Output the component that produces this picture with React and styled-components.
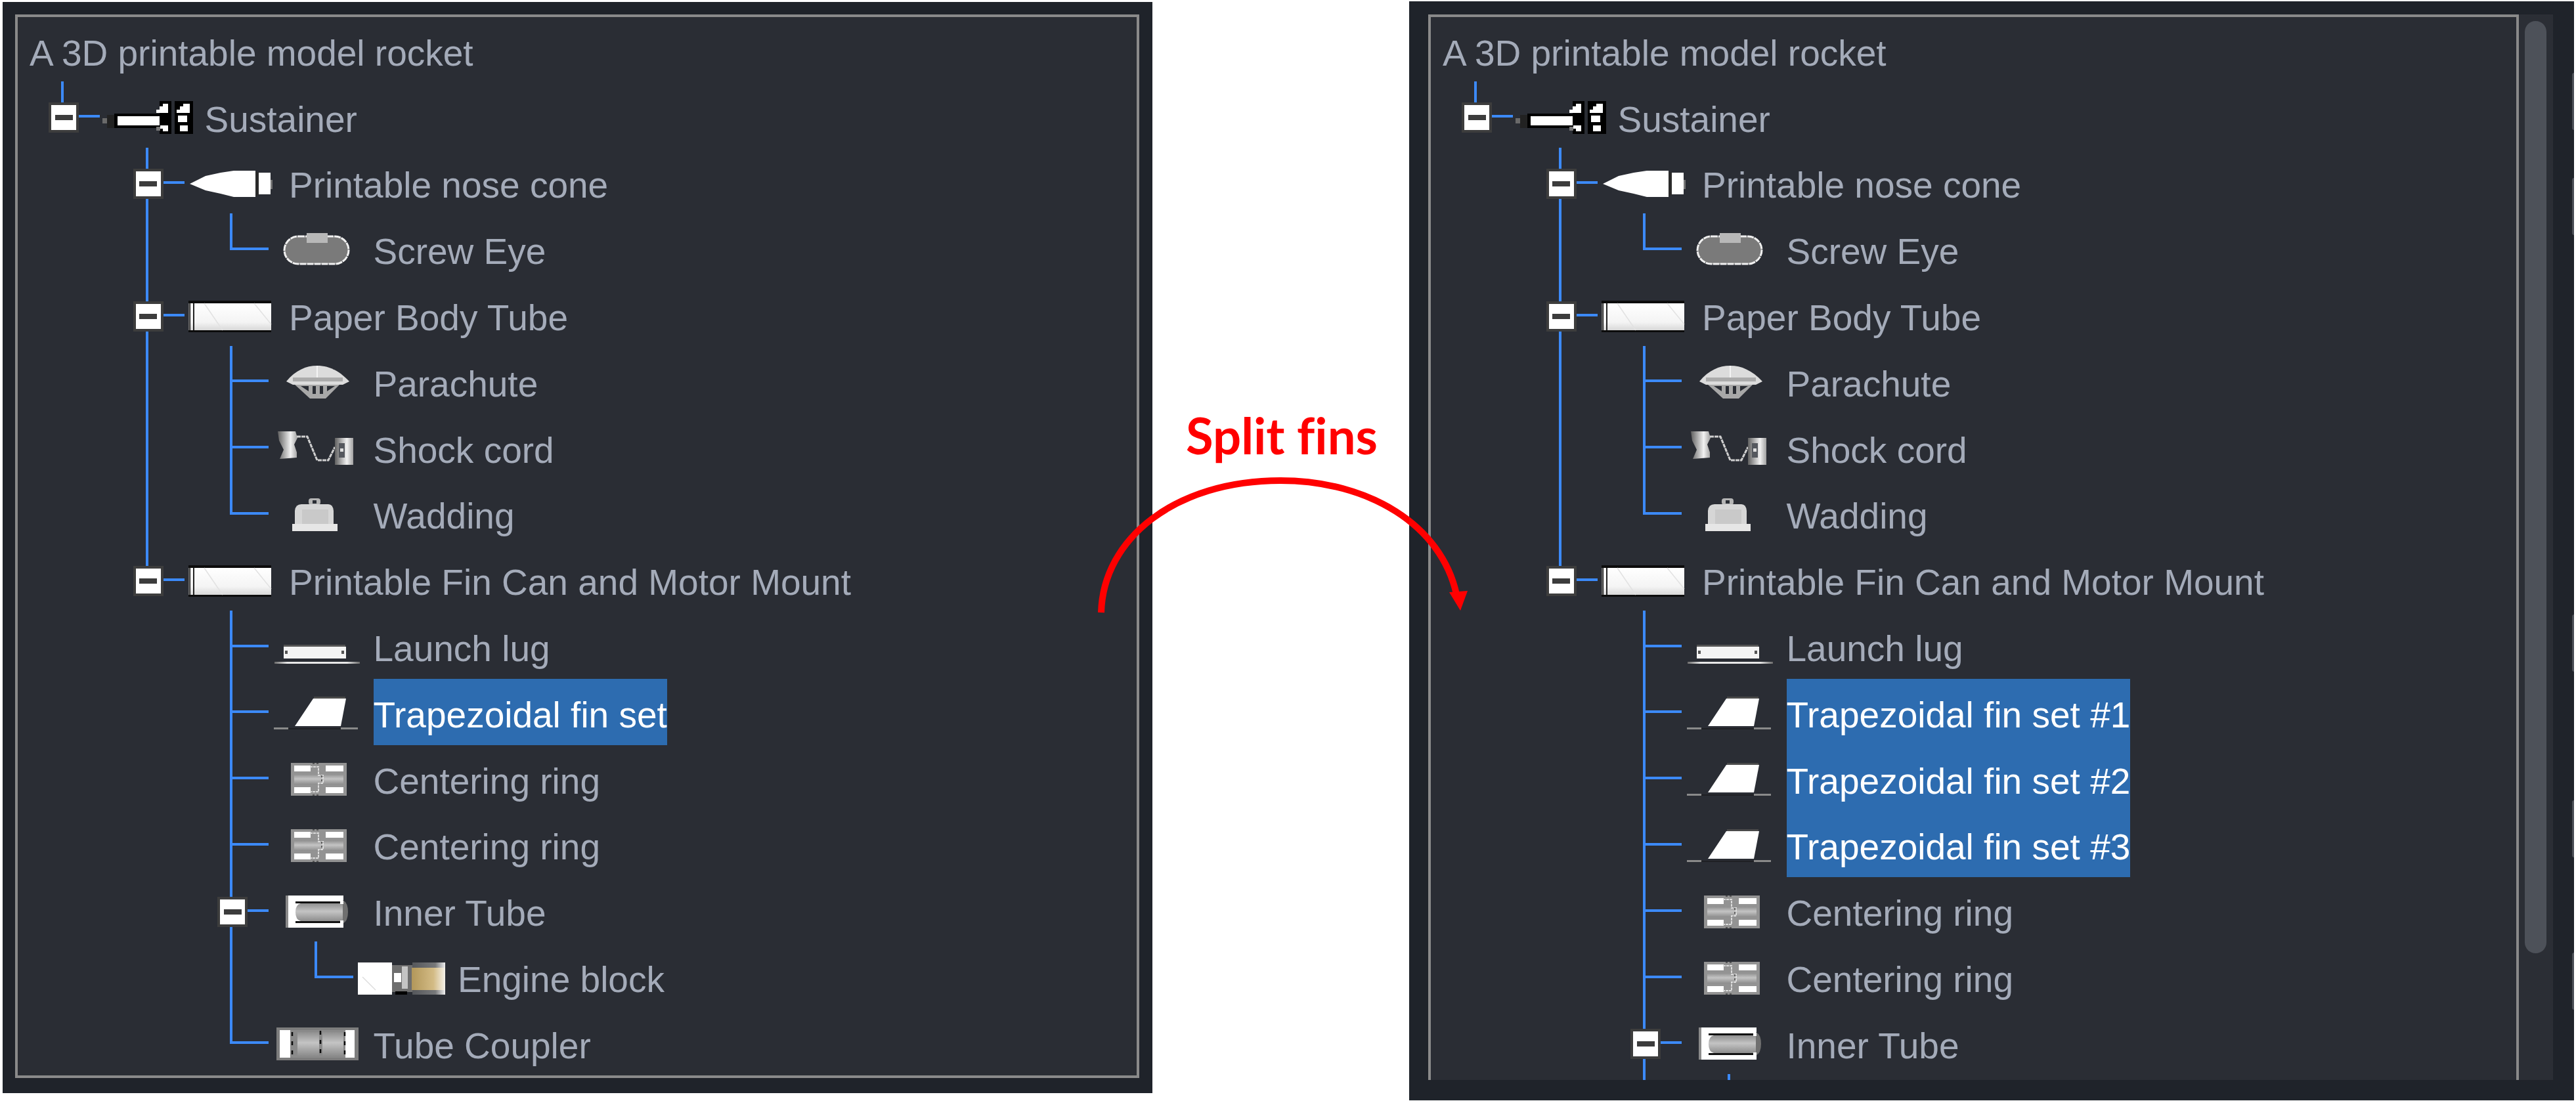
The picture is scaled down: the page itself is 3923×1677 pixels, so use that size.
import React from 'react'
import styled, { createGlobalStyle } from 'styled-components'

const GlobalStyle = createGlobalStyle`
  html, body { margin: 0; padding: 0; background: #fff; }
  body { font-family: "Liberation Sans", Arial, sans-serif; }
`

const Page = styled.div`
  display: flex;
  align-items: flex-start;
  width: 3923px;
  height: 1677px;
  overflow: hidden;
  background: #fff;
`
const Panel = styled.section`
  display: flex;
  box-sizing: border-box;
  flex: none;
  background: #1f232a;
`
const LeftPanel = styled(Panel)`
  width: 1751px;
  height: 1662px;
  margin: 3px 0 0 4px;
  padding: 19px 20px 23px 19px;
`
const RightPanel = styled(Panel)`
  width: 1774px;
  height: 1674px;
  margin-top: 2px;
  padding: 20px 0 31px 29px;
`
const Frame = styled.div`
  flex: 1;
  box-sizing: border-box;
  overflow: hidden;
  background: #2a2d34;
  border: 4px solid #8a8a8a;
  ${p => p.$open && 'border-bottom: 0;'}
`
const Track = styled.div`
  flex: none;
  box-sizing: border-box;
  width: 52px;
  padding: 10px 10px 193px 9px;
  background: #2b2e35;
`
const Thumb = styled.div`
  height: 100%;
  border-radius: 17px;
  background: #4d5159;
`
const EdgeRail = styled.div`
  flex: none;
  display: flex;
  flex-direction: column;
  align-items: flex-end;
  width: 32px;
`
const EdgeTab = styled.span`
  width: 3px;
  height: 87px;
  margin-top: ${p => p.$gap}px;
  border-radius: 3px 0 0 3px;
  background: #4b4f56;
`
const Gutter = styled.div`
  position: relative;
  flex: none;
  box-sizing: border-box;
  width: 391px;
  padding: 618px 0 0 3px;
  text-align: center;
`
const Caption = styled.div`
  font-family: Lato, "Liberation Sans", sans-serif;
  font-weight: 700;
  font-size: 76px;
  line-height: 90px;
  font-variant-ligatures: none;
  color: #ff0000;
  white-space: nowrap;
`
const ArrowArt = styled.svg`
  position: absolute;
  left: -1755px;
  top: 0;
  z-index: 5;
  overflow: visible;
  pointer-events: none;
`
const Row = styled.div`
  display: flex;
  height: 100.8px;
  padding-left: 4px;
`
const Guide = styled.div`
  position: relative;
  flex: none;
  width: 128.5px;

  /* vertical part */
  ${p => p.$kind !== 'blank' && `
    &::before {
      content: '';
      position: absolute;
      left: 62px;
      width: 4px;
      top: -3px;
      bottom: ${p.$kind === 'elbow' || p.$kind === 'end' ? '50%' : '0'};
      background: #3c8afa;
    }
  `}
  /* horizontal part */
  ${p => p.$kind !== 'blank' && p.$kind !== 'pipe' && `
    &::after {
      content: '';
      position: absolute;
      left: 62px;
      width: 59px;
      top: 50%;
      height: 4px;
      margin-top: -2px;
      background: #3c8afa;
    }
  `}
`
const Expander = styled.span`
  position: absolute;
  z-index: 2;
  left: 43px;
  top: 50%;
  margin-top: -21px;
  box-sizing: border-box;
  width: 46px;
  height: 46px;
  display: flex;
  align-items: center;
  justify-content: center;
  background: #fff;
  border: 4px solid #3d3d3d;

  &::after {
    content: '';
    width: 27px;
    height: 8px;
    background: #3c3c3c;
  }
`
const IconSlot = styled.div`
  flex: none;
  display: flex;
  align-items: center;
  justify-content: center;
  width: 130px;
  margin-right: 22px;
`
const IconArt = styled.svg`
  flex: none;
  width: 140px;
  height: 60px;
  margin: 0 -5px;
  overflow: visible;
  filter: blur(0.6px);
`
const Label = styled.span`
  display: flex;
  align-items: center;
  box-sizing: border-box;
  height: 100%;
  padding-top: 9px;
  margin-left: ${p => (p.$root ? '14px' : '0')};
  font-size: 55px;
  white-space: nowrap;
  color: ${p => (p.$selected ? '#fff' : '#a4abb9')};
  background: ${p => (p.$selected ? '#2d6cb0' : 'transparent')};
`

const greys = (
  <defs>
    <linearGradient id="tubeShade" x1="0" y1="0" x2="0" y2="1">
      <stop offset="0" stopColor="#fff" />
      <stop offset="0.7" stopColor="#f4f4f4" />
      <stop offset="1" stopColor="#d8d8d8" />
    </linearGradient>
    <linearGradient id="midShade" x1="0" y1="0" x2="0" y2="1">
      <stop offset="0" stopColor="#8f8f8f" />
      <stop offset="0.45" stopColor="#c4c4c4" />
      <stop offset="1" stopColor="#8d8d8d" />
    </linearGradient>
    <linearGradient id="cordShade" x1="0" y1="0" x2="1" y2="0">
      <stop offset="0" stopColor="#5f5f5f" />
      <stop offset="0.65" stopColor="#f2f2f2" />
      <stop offset="1" stopColor="#a0a0a0" />
    </linearGradient>
    <linearGradient id="goldShade" x1="0" y1="0" x2="1" y2="0">
      <stop offset="0" stopColor="#b2975a" />
      <stop offset="0.65" stopColor="#d3bb85" />
      <stop offset="1" stopColor="#f5f2ea" />
    </linearGradient>
    <linearGradient id="goldEdge" x1="0" y1="0" x2="1" y2="0">
      <stop offset="0" stopColor="#55575b" />
      <stop offset="0.7" stopColor="#77787a" />
      <stop offset="1" stopColor="#f0f0f0" />
    </linearGradient>
    <linearGradient id="lugBase" x1="0" y1="0" x2="1" y2="0">
      <stop offset="0" stopColor="#6a6a6a" />
      <stop offset="0.15" stopColor="#e8e8e8" />
      <stop offset="0.85" stopColor="#e8e8e8" />
      <stop offset="1" stopColor="#6a6a6a" />
    </linearGradient>
  </defs>
)

const BodyTube = (
  <>
    <rect x="4" y="8" width="126" height="48" fill="#0c0c0c" />
    <rect x="7" y="12" width="123" height="41" fill="url(#tubeShade)" />
    <rect x="4" y="12" width="2" height="41" fill="#6a6a6a" />
    <rect x="11" y="12" width="2" height="41" fill="#222" />
    <path d="M28 12 L56 53 M104 12 L130 44" stroke="#e2e2e2" strokeWidth="1.5" />
  </>
)

const Ring = (
  <>
    <rect x="31" y="7" width="85" height="50" fill="#939393" />
    <rect x="36" y="11" width="25" height="9" fill="#fff" />
    <rect x="84" y="11" width="27" height="9" fill="#fff" />
    <rect x="36" y="44" width="25" height="9" fill="#fff" />
    <rect x="84" y="44" width="27" height="9" fill="#fff" />
    <rect x="36" y="24" width="75" height="16" fill="url(#midShade)" />
    <path d="M60 13 H73 V26 H80 V38 H73 V51 H60" fill="none" stroke="#dcdcdc" strokeWidth="2" strokeDasharray="4 1" />
    <path d="M64 8 H76 M64 56 H76 M78 26 V38" stroke="#444" strokeWidth="1.5" strokeDasharray="3 3" />
  </>
)

const Fin = (
  <>
    <polygon points="65,10 115,10 107,52 37,52" fill="#fff" />
    <rect x="66" y="7" width="48" height="3" fill="#4a4a4a" />
    <rect x="5" y="54" width="22" height="3" fill="#8a8a8a" />
    <rect x="107" y="54" width="26" height="3" fill="#8a8a8a" />
    <rect x="27" y="55" width="80" height="2" fill="#1f2024" />
  </>
)

const icons = {
  sustainer: (
    <>
      <rect x="1" y="33" width="8" height="8" fill="#6a6a6a" />
      <rect x="8" y="28" width="11" height="20" fill="#222" />
      <rect x="19" y="26" width="80" height="22" fill="#000" />
      <rect x="24" y="30" width="74" height="14" fill="#fff" />
      <rect x="88" y="7" width="18" height="50" fill="#000" />
      <polygon points="83,25 83,20 88,20 88,15 93,15 93,11 101,11 101,25" fill="#fff" />
      <polygon points="89,44 101,44 101,53 93,53 93,49 89,49" fill="#fff" />
      <rect x="83" y="46" width="6" height="6" fill="#777" />
      <rect x="111" y="7" width="28" height="50" fill="#000" />
      <polygon points="114,25 114,20 119,20 119,15 124,15 124,11 134,11 134,25" fill="#fff" />
      <rect x="116" y="29" width="14" height="10" fill="#fff" />
      <polygon points="119,44 131,44 131,53 119,53" fill="#fff" />
    </>
  ),
  cone: (
    <>
      <polygon points="6,32 30,20 53,15 73,12 106,12 106,52 73,52 53,47 30,42" fill="#fff" />
      <rect x="106" y="14" width="5" height="36" fill="#2a2a2a" />
      <rect x="111" y="15" width="18" height="33" fill="#fff" />
      <rect x="129" y="26" width="3" height="14" fill="#777" />
    </>
  ),
  eye: (
    <>
      <rect x="21" y="11" width="98" height="42" rx="21" fill="#7a7a7a" stroke="#f0f0f0" strokeWidth="3" strokeDasharray="10 1" />
      <rect x="55" y="6" width="32" height="15" fill="#b8b8b8" />
    </>
  ),
  tube: BodyTube,
  parachute: (
    <>
      <polygon points="36,35 106,35 84,57 60,57" fill="#a8a8a8" />
      <polygon points="46,38 58,38 58,46" fill="#2a2d34" />
      <polygon points="64,38 69,38 69,50 64,50" fill="#2a2d34" />
      <polygon points="75,38 80,38 80,50 75,50" fill="#2a2d34" />
      <polygon points="86,38 98,38 86,46" fill="#2a2d34" />
      <path d="M24 31 C38 14 54 7 71 7 C88 7 104 14 120 31 L110 36 H34 Z" fill="#dcdcdc" />
      <rect x="34" y="25" width="76" height="6" fill="#ababab" />
      <path d="M71 7 V25" stroke="#f4f4f4" strokeWidth="2" />
    </>
  ),
  cord: (
    <>
      <polygon points="11,6 38,6 41,16 36,26 40,38 40,46 14,48 20,34 13,20" fill="url(#cordShade)" />
      <path d="M40 14 H56 L71 50 H88 L98 30" fill="none" stroke="#cfcfcf" strokeWidth="3" strokeDasharray="6 1" />
      <rect x="98" y="16" width="28" height="41" fill="url(#cordShade)" />
      <rect x="104" y="24" width="9" height="22" fill="#55585e" />
      <rect x="106" y="32" width="5" height="5" fill="#ddd" />
    </>
  ),
  wadding: (
    <>
      <rect x="58" y="7" width="18" height="10" rx="4" fill="#b5b5b5" />
      <rect x="64" y="10" width="6" height="5" fill="#2a2d34" />
      <path d="M37 26 Q38 16 47 16 H88 Q95 16 96 26 V47 H37 Z" fill="#d6d6d6" />
      <rect x="48" y="24" width="40" height="22" fill="#c9c9c9" />
      <rect x="33" y="46" width="69" height="11" fill="#e6e6e6" />
    </>
  ),
  lug: (
    <>
      <rect x="20" y="28" width="94" height="3" fill="#555" />
      <rect x="20" y="31" width="95" height="18" fill="#f4f4f4" />
      <rect x="22" y="37" width="4" height="5" fill="#555" />
      <rect x="108" y="37" width="4" height="5" fill="#555" />
      <rect x="6" y="54" width="130" height="3" fill="url(#lugBase)" />
    </>
  ),
  fin: Fin,
  ring: Ring,
  inner: (
    <>
      <rect x="23" y="7" width="4" height="49" fill="#8a8a8a" />
      <rect x="27" y="7" width="84" height="49" fill="#fff" />
      <path d="M110 14 Q118 18 118 32 Q118 46 110 50 Z" fill="#6f6f6f" />
      <rect x="38" y="16" width="72" height="3" fill="#111" />
      <rect x="38" y="46" width="72" height="3" fill="#111" />
      <path d="M46 19 H110 V46 H46 Q38 44 38 32 Q38 21 46 19 Z" fill="url(#midShade)" />
      <rect x="106" y="15" width="5" height="5" fill="#fff" />
      <rect x="106" y="45" width="5" height="5" fill="#fff" />
    </>
  ),
  engine: (
    <>
      <rect x="5" y="8" width="52" height="49" fill="#fff" />
      <path d="M12 30 L32 50" stroke="#ddd" strokeWidth="1.5" />
      <rect x="57" y="12" width="31" height="41" fill="#6e6e6e" />
      <rect x="60" y="24" width="11" height="14" fill="#fff" />
      <rect x="72" y="14" width="9" height="34" fill="#c4c4c4" />
      <rect x="62" y="52" width="18" height="5" fill="#000" />
      <rect x="88" y="8" width="50" height="49" fill="url(#goldEdge)" />
      <rect x="87" y="16" width="51" height="34" fill="url(#goldShade)" />
    </>
  ),
  coupler: (
    <>
      <rect x="9" y="7" width="125" height="50" fill="#7d7d7d" />
      <rect x="14" y="11" width="16" height="42" fill="#fff" />
      <rect x="113" y="11" width="15" height="42" fill="#fff" />
      <rect x="30" y="11" width="84" height="42" fill="#8a8a8a" />
      <rect x="41" y="14" width="33" height="36" fill="url(#midShade)" />
      <rect x="79" y="14" width="32" height="36" fill="url(#midShade)" />
      <path d="M33 14 V50 M76 12 V52 M113 14 V50" stroke="#0c0c0c" strokeWidth="2.5" strokeDasharray="6 8" />
    </>
  ),
}

const upper = [
  { guides: [], label: 'A 3D printable model rocket', root: true },
  { guides: ['end'], icon: 'sustainer', label: 'Sustainer', open: true },
  { guides: ['blank', 'tee'], icon: 'cone', label: 'Printable nose cone', open: true },
  { guides: ['blank', 'pipe', 'elbow'], icon: 'eye', label: 'Screw Eye' },
  { guides: ['blank', 'tee'], icon: 'tube', label: 'Paper Body Tube', open: true },
  { guides: ['blank', 'pipe', 'tee'], icon: 'parachute', label: 'Parachute' },
  { guides: ['blank', 'pipe', 'tee'], icon: 'cord', label: 'Shock cord' },
  { guides: ['blank', 'pipe', 'elbow'], icon: 'wadding', label: 'Wadding' },
  { guides: ['blank', 'end'], icon: 'tube', label: 'Printable Fin Can and Motor Mount', open: true },
  { guides: ['blank', 'blank', 'tee'], icon: 'lug', label: 'Launch lug' },
]

const before = [
  ...upper,
  { guides: ['blank', 'blank', 'tee'], icon: 'fin', label: 'Trapezoidal fin set', selected: true },
  { guides: ['blank', 'blank', 'tee'], icon: 'ring', label: 'Centering ring' },
  { guides: ['blank', 'blank', 'tee'], icon: 'ring', label: 'Centering ring' },
  { guides: ['blank', 'blank', 'tee'], icon: 'inner', label: 'Inner Tube', open: true },
  { guides: ['blank', 'blank', 'pipe', 'elbow'], icon: 'engine', label: 'Engine block' },
  { guides: ['blank', 'blank', 'elbow'], icon: 'coupler', label: 'Tube Coupler' },
]

const after = [
  ...upper,
  { guides: ['blank', 'blank', 'tee'], icon: 'fin', label: 'Trapezoidal fin set #1', selected: true },
  { guides: ['blank', 'blank', 'tee'], icon: 'fin', label: 'Trapezoidal fin set #2', selected: true },
  { guides: ['blank', 'blank', 'tee'], icon: 'fin', label: 'Trapezoidal fin set #3', selected: true },
  { guides: ['blank', 'blank', 'tee'], icon: 'ring', label: 'Centering ring' },
  { guides: ['blank', 'blank', 'tee'], icon: 'ring', label: 'Centering ring' },
  { guides: ['blank', 'blank', 'tee'], icon: 'inner', label: 'Inner Tube', open: true },
  { guides: ['blank', 'blank', 'pipe', 'elbow'] },
]

const edgeGaps = [89, 73, 578, 196, 145]

const Tree = ({ rows }) => (
  <>
    {rows.map((row, i) => (
      <Row key={i}>
        {row.guides.map((kind, g) => (
          <Guide key={g} $kind={kind}>
            {row.open && g === row.guides.length - 1 && <Expander />}
          </Guide>
        ))}
        {row.icon && (
          <IconSlot>
            <IconArt viewBox="0 0 140 60">
              {greys}
              {icons[row.icon]}
            </IconArt>
          </IconSlot>
        )}
        {row.label && (
          <Label $root={row.root} $selected={row.selected}>
            {row.label}
          </Label>
        )}
      </Row>
    ))}
  </>
)

export default function App() {
  return (
    <Page>
      <GlobalStyle />
      <LeftPanel>
        <Frame>
          <Tree rows={before} />
        </Frame>
      </LeftPanel>
      <Gutter>
        <Caption>Split fins</Caption>
        <ArrowArt width="3923" height="1677" viewBox="0 0 3923 1677">
          <path
            d="M1677 933 C1680 820 1790 732 1950 732 C2085 732 2195 800 2218 905"
            fill="none"
            stroke="#ff0000"
            strokeWidth="10"
          />
          <polygon points="2207,902 2235,900 2224,930" fill="#ff0000" />
        </ArrowArt>
      </Gutter>
      <RightPanel>
        <Frame $open>
          <Tree rows={after} />
        </Frame>
        <Track>
          <Thumb />
        </Track>
        <EdgeRail>
          {edgeGaps.map((gap, i) => (
            <EdgeTab key={i} $gap={gap} />
          ))}
        </EdgeRail>
      </RightPanel>
    </Page>
  )
}
